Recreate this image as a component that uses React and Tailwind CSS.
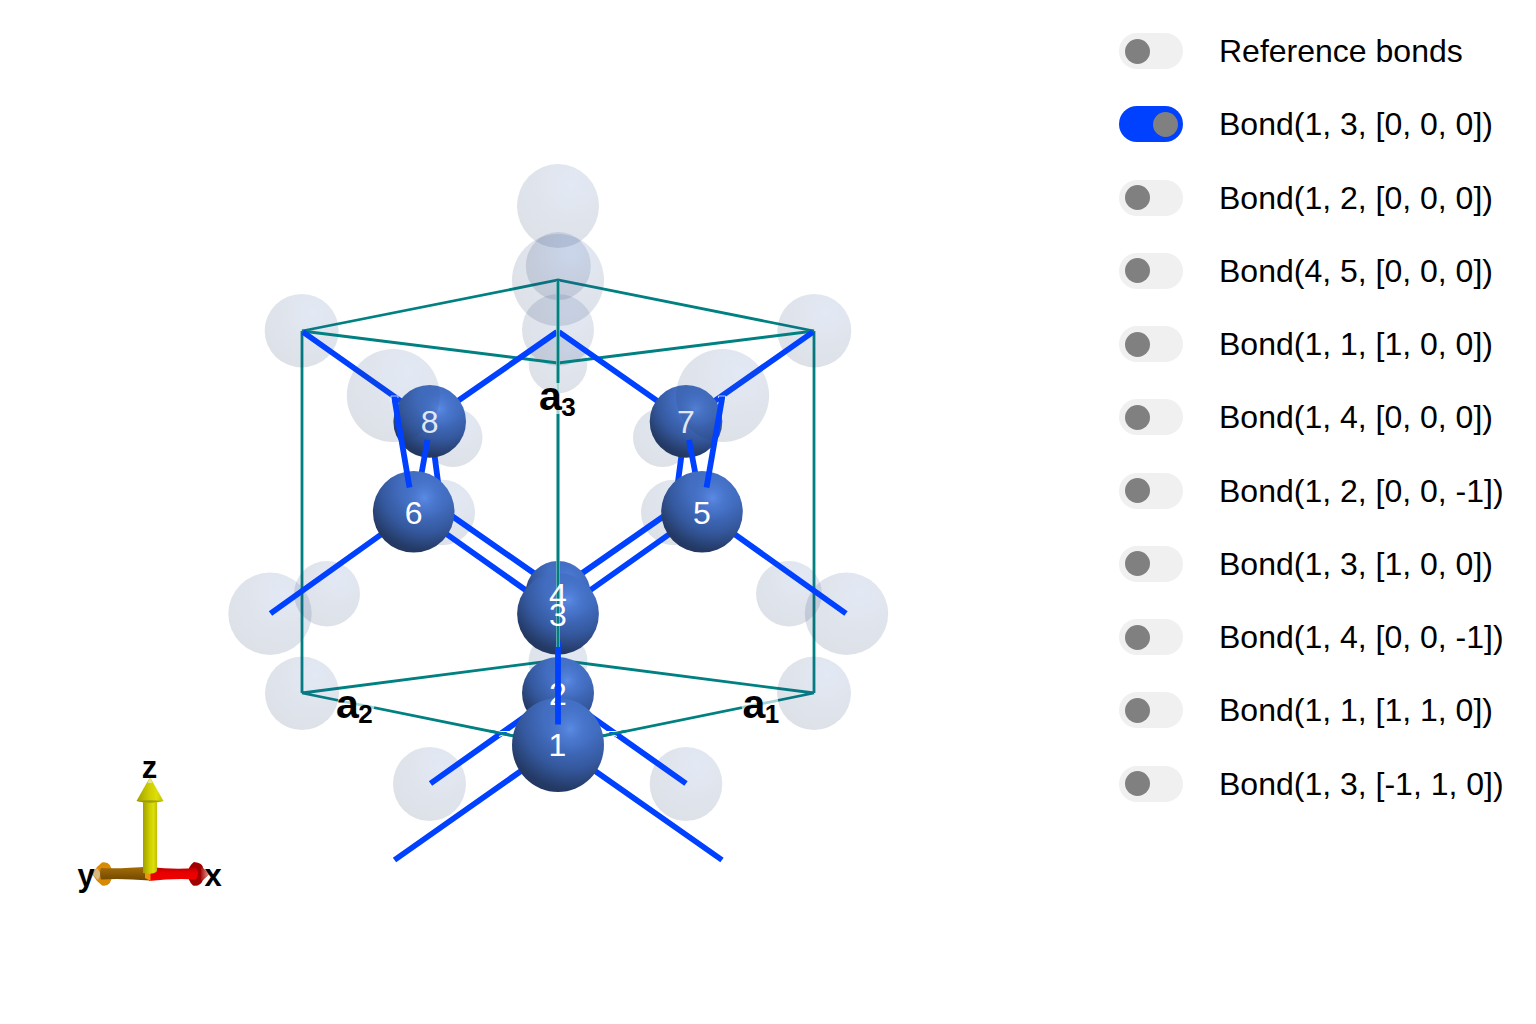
const F = '"Liberation Sans", Arial, sans-serif';

const ghosts = [
  [558, 206, 41, 42], [558.3, 266, 32.5, 34], [558, 280, 46, 46], [558, 330, 36, 36], [558, 363.7, 29.3, 29.5],
  [301.7, 330.7, 37, 36.7], [814.3, 330.7, 37, 36.7],
  [453, 437.5, 29.5, 29.5], [662.5, 437.5, 29.5, 29.5],
  [442.3, 512.5, 32.7, 32.7], [673.7, 512.5, 32.7, 32.7],
  [327, 593.7, 33, 32.7], [789, 593.7, 33, 32.7],
  [270, 613.8, 41.7, 41.2], [846.5, 613.8, 41.7, 41.2],
  [302, 693.3, 37, 36.7], [814, 693.3, 37, 36.7],
  [429.5, 784, 36.5, 37], [686, 784, 36.3, 37],
  [558, 661.5, 29.5, 29.5],
];
const frontGhosts = [[393.3, 395.5, 46.5, 46.5], [722.6, 395.5, 46.5, 46.5]];

const Ghost = ({ g }) => <ellipse cx={g[0]} cy={g[1]} rx={g[2]} ry={g[3]} fill="url(#ghost)" />;

const Atom = ({ x, y, rx, ry = rx }) => (
  <g>
    <ellipse cx={x} cy={y} rx={rx} ry={ry} fill="url(#body)" />
    <ellipse cx={x} cy={y} rx={rx} ry={ry} fill="url(#shine)" />
  </g>
);

const Lines = ({ d, w, c }) => <path d={d} stroke={c} strokeWidth={w} fill="none" />;
const Cell = ({ d }) => <Lines d={d} w={2.8} c="#008080" />;
const Bond = ({ d }) => <Lines d={d} w={5.8} c="#0040ff" />;

const Num = ({ x, y, children, o = 1 }) => (
  <text x={x} y={y} fontFamily={F} fontSize="32" textAnchor="middle" fill="#fff" fillOpacity={o}>{children}</text>
);

const Axis = ({ x, y, n }) => (
  <text x={x} y={y} fontFamily={F} fontWeight="700" fontSize="41" fill="#000">
    a<tspan fontSize="26" dy="5.500" dx="-0.500">{n}</tspan>
  </text>
);

function Compass() {
  return (
    <g>
      <path d="M97 867 L102 862.500 Q112 861 112 874 Q112 887 102 885.500 L97 881 L92 874Z" fill="#d98a05" />
      <path d="M97 868 L92 874 L98 880 L101 874Z" fill="#d8b785" />
      <path d="M101 868 Q120 869 150 866.500 V880.500 Q120 878 101 879.500 Q99 873 101 868Z" fill="url(#axY)" />
      <path d="M194 862 Q203 863 203 868 L209 874 L203 880 Q200 887 193 885.500 Q188 881 188 874 Q188 866 194 862Z" fill="#a00000" />
      <path d="M201 867 L209 874 L201 881Z" fill="url(#tipX)" />
      <path d="M149 867 Q175 870 196 868 Q200 873 196 879.500 Q175 878 149 881Z" fill="url(#axX)" />
      <path d="M145 872H150.500V881L145 878Z" fill="#f0940c" />
      <path d="M143 800H157V871Q154 875 143 873Z" fill="url(#axZ)" />
      <path d="M150 777L163.500 801Q150 805 136.500 801Z" fill="url(#axZ)" />
      <path d="M137 801Q150 804.500 163 801Q150 799.500 137 801Z" fill="#8c8c00" fillOpacity="0.7" />
      <path d="M147.500 783L150 777L152.500 783Z" fill="#e5e29a" />
      <g fontFamily={F} fontWeight="700" fontSize="31" textAnchor="middle">
        <text x="149.500" y="777.500">z</text>
        <text x="86" y="885.500">y</text>
        <text x="213" y="885.500">x</text>
      </g>
    </g>
  );
}

function Scene() {
  return (
    <svg className="block h-[1024px] w-[1100px] shrink-0" viewBox="0 0 1100 1024">
      <defs>
        <radialGradient id="body" cx="0.65" cy="0.2" r="0.88">
          <stop offset="0" stopColor="#4573ca" />
          <stop offset="0.35" stopColor="#426dc0" />
          <stop offset="0.62" stopColor="#35599f" />
          <stop offset="0.88" stopColor="#243a66" />
          <stop offset="1" stopColor="#21345b" />
        </radialGradient>
        <radialGradient id="shine" cx="0.63" cy="0.33" r="0.28">
          <stop offset="0" stopColor="#6394ef" stopOpacity="0.75" />
          <stop offset="0.5" stopColor="#5684de" stopOpacity="0.35" />
          <stop offset="1" stopColor="#4674cc" stopOpacity="0" />
        </radialGradient>
        <radialGradient id="ghost" cx="0.66" cy="0.25" r="0.8">
          <stop offset="0" stopColor="#3c68b8" stopOpacity="0.145" />
          <stop offset="0.45" stopColor="#30508a" stopOpacity="0.15" />
          <stop offset="1" stopColor="#1e3460" stopOpacity="0.15" />
        </radialGradient>
        <linearGradient id="axY" x2="0" y2="1">
          <stop offset="0" stopColor="#a66d08" /><stop offset="1" stopColor="#704800" />
        </linearGradient>
        <linearGradient id="axX" x2="0" y2="1">
          <stop offset="0" stopColor="#b80000" /><stop offset="0.4" stopColor="#e80000" /><stop offset="1" stopColor="#f40000" />
        </linearGradient>
        <linearGradient id="tipX">
          <stop offset="0" stopColor="#b01010" /><stop offset="1" stopColor="#e0a0a0" />
        </linearGradient>
        <linearGradient id="axZ">
          <stop offset="0" stopColor="#a0a000" /><stop offset="0.5" stopColor="#d0d000" /><stop offset="0.75" stopColor="#dede0c" /><stop offset="1" stopColor="#c0c000" />
        </linearGradient>
      </defs>

      <Cell d="M302 331L558 280L814 331M302 331V693M814 331V693M302 693L558 660L814 693M302 693L558 745L814 693" />
      {ghosts.map((g, i) => <Ghost key={i} g={g} />)}
      <Cell d="M302 331L558 363L814 331" />

      <Bond d="M303 332L429 421L557 332M559 332L686 421L813 332" />
      <Bond d="M430 421L442 512M686 421L674 512M442 509L558 590M674 509L558 590M414 511L558 613M702 511L558 613" />
      <Bond d="M414 511L270.500 613.500M702 511L846 613.500" />
      <Bond d="M558 693L430.500 783.500M558 693L686 783.500M558 745L394.500 860M558 745L722 860" />
      <path d="M496 731.500H511L499 736.500M620 731.500H605L617 736.500" stroke="#fff" strokeWidth="1.200" fill="none" />
      <Cell d="M490 731L520 737M626 731L596 737" />

      <Atom x={429.7} y={421.4} rx={36.3} />
      <Atom x={686} y={421.4} rx={36.3} />
      {frontGhosts.map((g, i) => <Ghost key={i} g={g} />)}
      <Bond d="M427.500 440L420 482M689 440L697 482" />
      <Num x={429.7} y={433} o={0.85}>8</Num>
      <Num x={686} y={433} o={0.85}>7</Num>
      <Atom x={413.7} y={511.8} rx={40.8} />
      <Atom x={702} y={511.8} rx={40.8} />
      <Bond d="M394 396L409.500 487.500M722.500 396L706.500 487.500" />
      <path d="M391 401V396H398V398M725.500 401V396H718.500V398" stroke="#fff" strokeOpacity="0.7" strokeWidth="1" fill="none" />
      <Num x={413.7} y={524}>6</Num>
      <Num x={702} y={524}>5</Num>

      <Atom x={558} y={593.5} rx={32.5} />
      <Atom x={558} y={613.8} rx={40.9} />
      <Atom x={558} y={693} rx={36} />
      <Atom x={558} y={745} rx={46} ry={47} />
      <Num x={558} y={704.5}>2</Num>
      <Bond d="M558 641V724.500" />
      <path d="M558 281V647" stroke="#9fcdcd" strokeWidth="4" strokeOpacity="0.8" />
      <path d="M558 280V647" stroke="#008080" strokeWidth="2.600" />
      <Num x={558} y={606}>4</Num>
      <Num x={558} y={626}>3</Num>
      <Num x={557.5} y={756}>1</Num>

      <g stroke="#fff" strokeOpacity="0.65" strokeWidth="4" fill="none">
        <path d="M338 700L374 708M742 708L778 700M558 383V414" />
      </g>
      <Axis x={539} y={410} n={3} />
      <Axis x={336} y={717.5} n={2} />
      <Axis x={742.5} y={717.5} n={1} />
      <Compass />
    </svg>
  );
}

const rows = [
  "Reference bonds", "Bond(1, 3, [0, 0, 0])", "Bond(1, 2, [0, 0, 0])", "Bond(4, 5, [0, 0, 0])",
  "Bond(1, 1, [1, 0, 0])", "Bond(1, 4, [0, 0, 0])", "Bond(1, 2, [0, 0, -1])", "Bond(1, 3, [1, 0, 0])",
  "Bond(1, 4, [0, 0, -1])", "Bond(1, 1, [1, 1, 0])", "Bond(1, 3, [-1, 1, 0])",
];

function Toggle({ on }) {
  return (
    <span className={`flex h-9 w-16 shrink-0 items-center rounded-full px-[5.500px] ${on ? "justify-end bg-[#0040ff]" : "justify-start bg-[#f0f0f0]"}`}>
      <span className="size-[25px] rounded-full bg-[#808080]" />
    </span>
  );
}

export default function App() {
  return (
    <main className="flex h-[1024px] w-[1536px] overflow-hidden bg-white text-black">
      <Scene />
      <aside className="flex flex-col gap-[37.250px] pt-[33px] pl-[19px] font-['Liberation_Sans',Arial,sans-serif]">
        {rows.map((r, i) => (
          <label key={r} className="flex h-9 items-center gap-9 whitespace-nowrap text-[32px] leading-9">
            <Toggle on={i === 1} />
            <span>{r}</span>
          </label>
        ))}
      </aside>
    </main>
  );
}
